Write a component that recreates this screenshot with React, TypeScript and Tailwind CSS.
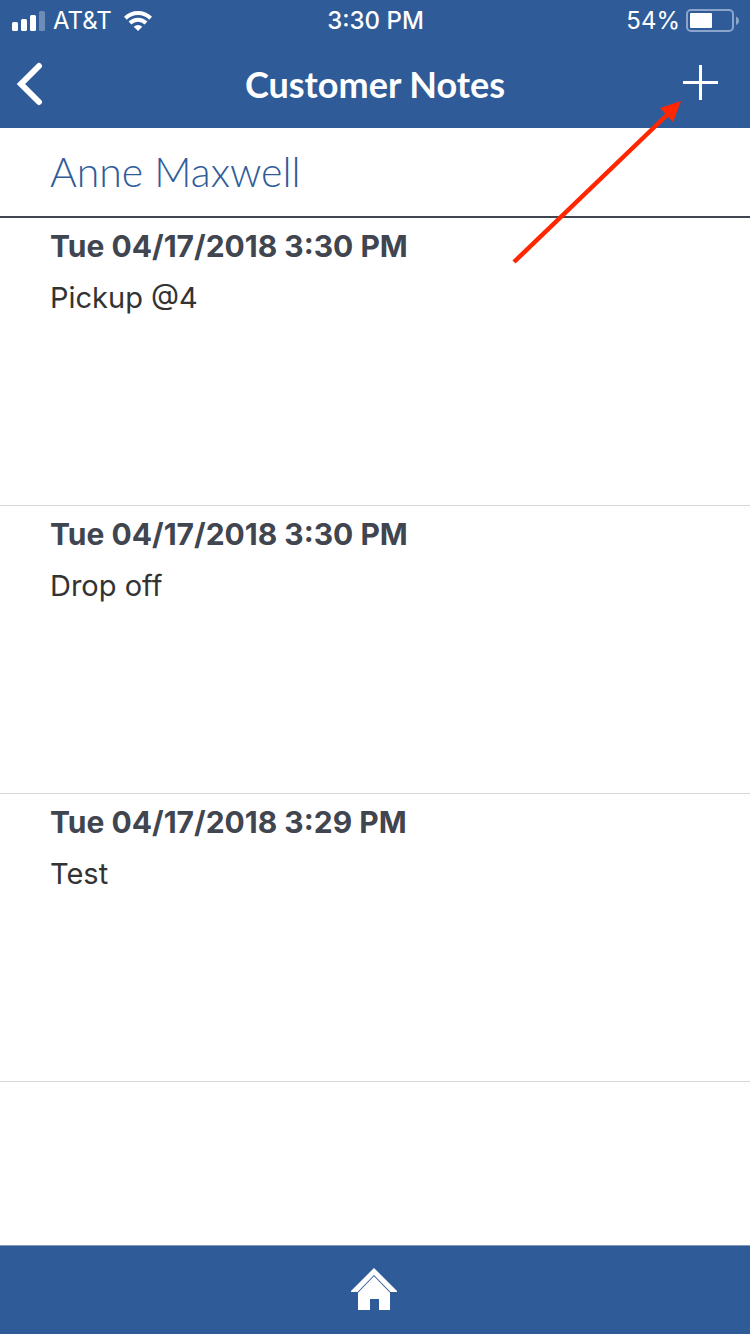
type Note = { id: number; date: string; text: string };

const notes: Note[] = [
  { id: 1, date: "Tue 04/17/2018 3:30 PM", text: "Pickup @4" },
  { id: 2, date: "Tue 04/17/2018 3:30 PM", text: "Drop off" },
  { id: 3, date: "Tue 04/17/2018 3:29 PM", text: "Test" },
];

function SignalIcon() {
  return (
    <svg width="33" height="20" viewBox="0 0 33 20" fill="#fff" aria-hidden="true">
      <rect x="0" y="11" width="6" height="9" rx="1.5" />
      <rect x="9" y="8" width="6" height="12" rx="1.5" />
      <rect x="18" y="4" width="6" height="16" rx="1.5" />
      <rect x="27" y="0" width="6" height="20" rx="1.5" opacity="0.3" />
    </svg>
  );
}

function WifiIcon() {
  return (
    <svg width="28" height="20" viewBox="0 0 28 20" aria-hidden="true">
      <g fill="none" stroke="#fff" strokeWidth="4">
        <path d="M1.4 7.2A18 18 0 0 1 26.6 7.2" />
        <path d="M6 12A11.5 11.5 0 0 1 22 12" />
      </g>
      <path d="M9.7 15.700A6 6 0 0 1 18.3 15.700L14 20Z" fill="#fff" />
    </svg>
  );
}

function BatteryIcon() {
  return (
    <svg width="53" height="24" viewBox="0 0 53 24" aria-hidden="true">
      <rect x="1" y="1" width="46" height="21" rx="4" fill="none" stroke="#8ba5cd" strokeWidth="2" />
      <rect x="4" y="4" width="22" height="15" rx="1" fill="#fff" />
      <path d="M50 7.500C54 9 54 14.500 50 16Z" fill="#8ba5cd" />
    </svg>
  );
}

function StatusBar() {
  return (
    <div className="grid h-10 grid-cols-[1fr_auto_1fr] items-center pt-0.5 pr-[11px] pl-3 text-2xl">
      <div className="flex items-center gap-2">
        <SignalIcon />
        <span>AT&amp;T</span>
        <span className="pl-1">
          <WifiIcon />
        </span>
      </div>
      <span className="font-medium">3:30 PM</span>
      <div className="flex items-center justify-end gap-1.5">
        <span>54%</span>
        <BatteryIcon />
      </div>
    </div>
  );
}

function NoteItem({ note }: { note: Note }) {
  return (
    <li className="min-h-72 border-b border-[#d7d8da] px-[50px] pt-[7px]">
      <h3 className="text-[30px] leading-[42px] font-bold text-[#40454f]">{note.date}</h3>
      <p className="pt-2.5 text-[29px] leading-[42px] text-[#333]">{note.text}</p>
    </li>
  );
}

export default function App() {
  return (
    <div className="relative flex min-h-screen flex-col bg-white font-['Inter','Liberation_Sans',sans-serif]">
      <header className="bg-[#2f5c99] text-white">
        <StatusBar />
        <nav className="grid h-[88px] grid-cols-[1fr_auto_1fr] items-center px-4">
          <button type="button" aria-label="Back" className="justify-self-start">
            <svg width="28" height="44" viewBox="0 0 28 44" aria-hidden="true">
              <path d="M23 4L5 22L23 40" fill="none" stroke="#fff" strokeWidth="6" strokeLinecap="round" strokeLinejoin="miter" />
            </svg>
          </button>
          <h1 className="font-['Lato','Liberation_Sans',sans-serif] text-4xl font-bold">Customer Notes</h1>
          <button type="button" aria-label="Add note" className="justify-self-end pr-4 pb-1">
            <svg width="35" height="35" viewBox="0 0 35 35" aria-hidden="true">
              <path d="M17.500 0V35M0 17.500H35" stroke="#fff" strokeWidth="3" />
            </svg>
          </button>
        </nav>
      </header>

      <main className="flex-1">
        <h2 className="border-b-2 border-[#40454f] px-[50px] py-4 font-['Lato','Liberation_Sans',sans-serif] text-[41px] leading-14 font-light text-[#2f5c99]">
          Anne Maxwell
        </h2>
        <ul>
          {notes.map((note) => (
            <NoteItem key={note.id} note={note} />
          ))}
        </ul>
      </main>

      <footer className="flex h-[89px] items-center justify-center border-t border-[#8598b5] bg-[#2f5c99] pr-0.5 pb-0.5">
        <a href="#home" aria-label="Home">
          <svg width="46" height="43" viewBox="0 0 46 43" fill="#fff" aria-hidden="true">
            <path d="M23 0L46 23V24H39.500L23 7L6.500 24H0V23Z" />
            <path d="M23 8.300L39 24.800V42H28V31H19V42H7V24.800Z" />
          </svg>
        </a>
      </footer>

      <svg
        className="pointer-events-none absolute top-[100px] right-[68px]"
        width="170"
        height="166"
        viewBox="0 0 170 166"
        aria-hidden="true"
      >
        <path d="M2 162L157 13" stroke="#ff2600" strokeWidth="4.500" />
        <path d="M169 1L148 8L161 22Z" fill="#ff2600" />
      </svg>
    </div>
  );
}
